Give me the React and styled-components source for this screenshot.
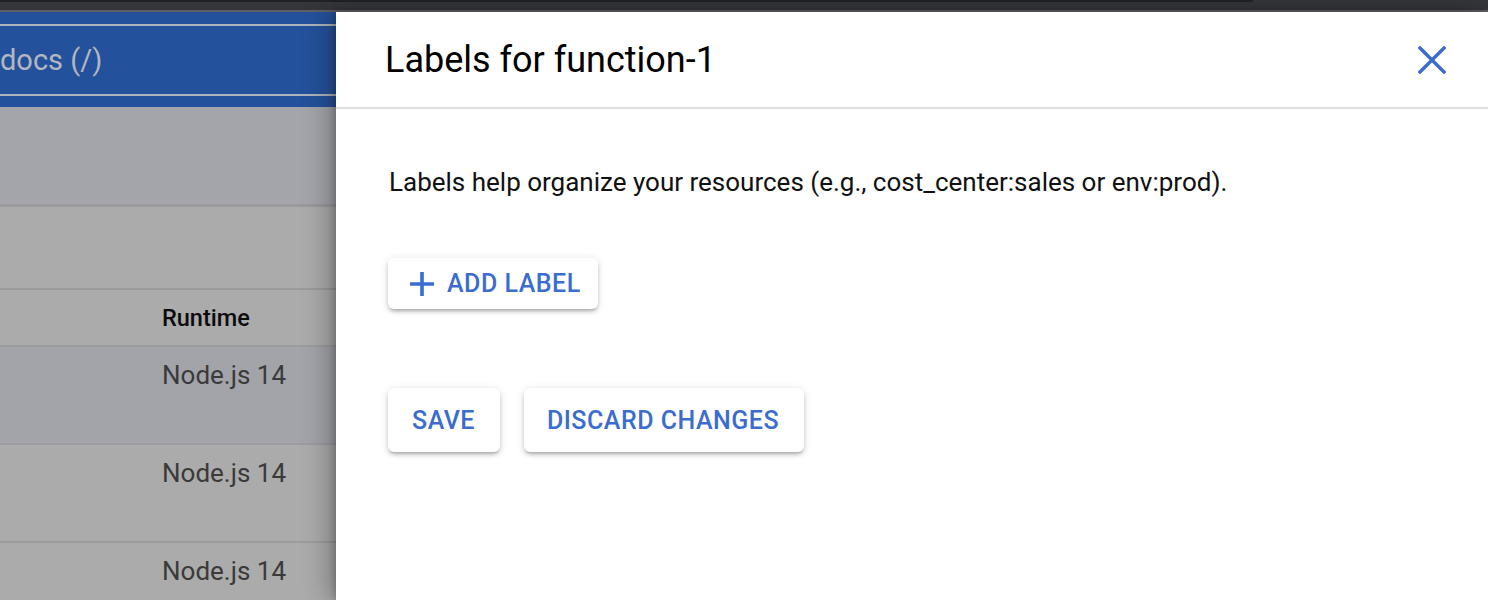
import styled, { createGlobalStyle } from 'styled-components';

const GlobalStyle = createGlobalStyle`
  html, body {
    margin: 0;
    padding: 0;
    overflow: hidden;
    background: #ababab;
  }
  * {
    box-sizing: border-box;
  }
`;

export default function App() {
  return (
    <>
      <GlobalStyle />
      <Page>
        <BrowserStrip>
          <TabEdge />
        </BrowserStrip>
        <Screen>
          <Behind>
            <SearchBar>
              <SearchField>
                <SearchHint>docs (/)</SearchHint>
              </SearchField>
            </SearchBar>
            <Band $tone="blue" $h={100} />
            <Band $tone="grey" $h={83} />
            <HeadRow>
              <Cell $head>Runtime</Cell>
            </HeadRow>
            <Row $tone="blue">
              <Cell>Node.js 14</Cell>
            </Row>
            <Row>
              <Cell>Node.js 14</Cell>
            </Row>
            <Row $last>
              <Cell>Node.js 14</Cell>
            </Row>
          </Behind>
          <Drawer>
            <DrawerHead>
              <Title>Labels for function-1</Title>
              <CloseButton aria-label="Close">
                <svg width="28" height="28" viewBox="0 0 28 28">
                  <path
                    d="M2 2 26 26 M26 2 2 26"
                    stroke="currentColor"
                    strokeWidth="3.4"
                    strokeLinecap="square"
                    fill="none"
                  />
                </svg>
              </CloseButton>
            </DrawerHead>
            <DrawerBody>
              <Hint>Labels help organize your resources (e.g., cost_center:sales or env:prod).</Hint>
              <Raised $h={51} $pl={22} $pr={17}>
                <svg width="24" height="24" viewBox="0 0 24 24">
                  <path d="M12 0v24M0 12h24" stroke="currentColor" strokeWidth="3.6" fill="none" />
                </svg>
                ADD LABEL
              </Raised>
              <Actions>
                <Raised $h={64} $pl={24} $pr={25}>SAVE</Raised>
                <Raised $h={64} $pl={23} $pr={25}>DISCARD CHANGES</Raised>
              </Actions>
            </DrawerBody>
          </Drawer>
        </Screen>
      </Page>
    </>
  );
}

const Page = styled.div`
  width: 1488px;
  height: 600px;
  display: flex;
  flex-direction: column;
  font-family: Roboto, "Liberation Sans", Arial, sans-serif;
  overflow: hidden;
`;

const BrowserStrip = styled.div`
  height: 12px;
  flex: none;
  background: #35363a;
  border-bottom: 2px solid #5f6064;
  position: relative;
`;

const TabEdge = styled.div`
  position: absolute;
  left: 0;
  top: 0;
  width: 1253px;
  height: 2px;
  background: #202124;
  border-bottom-right-radius: 6px;
`;

const Screen = styled.div`
  flex: 1;
  display: flex;
  min-height: 0;
`;

const Behind = styled.div`
  width: 336px;
  flex: none;
  display: flex;
  flex-direction: column;
  background: #ababab;
  overflow: hidden;
`;

const SearchBar = styled.div`
  height: 95px;
  flex: none;
  background: #24519b;
  padding-top: 12px;
`;

const SearchField = styled.div`
  height: 72px;
  border-top: 2px solid #afb3bb;
  border-bottom: 2px solid #afb3bb;
  display: flex;
  align-items: center;
`;

const SearchHint = styled.span`
  margin-left: 0;
  font-size: 29px;
  color: #b3b7c0;
  white-space: nowrap;
`;

const Band = styled.div`
  height: ${(p) => p.$h}px;
  flex: none;
  background: ${(p) => (p.$tone === 'blue' ? '#a4a5aa' : '#ababab')};
  border-bottom: ${(p) => (p.$tone === 'blue' ? '3px' : '2px')} solid #9a9a9a;
`;

const HeadRow = styled.div`
  height: 57px;
  flex: none;
  display: flex;
  align-items: center;
  padding-left: 162px;
  border-bottom: 2px solid #9c9c9c;
`;

const Row = styled.div`
  height: ${(p) => (p.$last ? 'auto' : '98px')};
  flex: ${(p) => (p.$last ? '1' : 'none')};
  padding: 13px 0 0 162px;
  background: ${(p) => (p.$tone === 'blue' ? '#a3a4a9' : '#ababab')};
  border-bottom: ${(p) => (p.$last ? 'none' : '2px solid #9c9c9c')};
`;

const Cell = styled.div`
  font-size: ${(p) => (p.$head ? '23.5px' : '26px')};
  line-height: ${(p) => (p.$head ? '28px' : '30px')};
  font-weight: ${(p) => (p.$head ? 500 : 400)};
  color: ${(p) => (p.$head ? '#0b0b0b' : '#3a3a3a')};
  white-space: nowrap;
`;

const Drawer = styled.div`
  flex: 1;
  background: #ffffff;
  display: flex;
  flex-direction: column;
  box-shadow: -8px 0 24px rgba(0, 0, 0, 0.28), -2px 0 6px rgba(0, 0, 0, 0.18);
  z-index: 1;
`;

const DrawerHead = styled.div`
  height: 97px;
  flex: none;
  display: flex;
  align-items: center;
  justify-content: space-between;
  padding: 0 42px 0 49px;
  border-bottom: 2px solid #e0e0e0;
`;

const Title = styled.h1`
  margin: 0;
  font-size: 36px;
  font-weight: 400;
  color: #000;
`;

const CloseButton = styled.button`
  border: none;
  background: none;
  padding: 0;
  display: flex;
  color: #3b6ccf;
  cursor: pointer;
`;

const DrawerBody = styled.div`
  display: flex;
  flex-direction: column;
  align-items: flex-start;
  padding: 58px 52px 0 52px;
`;

const Hint = styled.p`
  margin: 0 0 61px 1px;
  font-size: 26px;
  line-height: 30px;
  color: #111;
`;

const Raised = styled.button`
  height: ${(p) => p.$h}px;
  padding: 0 ${(p) => p.$pr}px 0 ${(p) => p.$pl}px;
  display: inline-flex;
  align-items: center;
  gap: 13px;
  border: none;
  border-radius: 6px;
  background: #fff;
  color: #3b6ccf;
  font-family: Roboto, "Liberation Sans", Arial, sans-serif;
  font-size: 25px;
  font-weight: 500;
  letter-spacing: 0.5px;
  box-shadow: 0 3px 3px -2px rgba(0, 0, 0, 0.2), 0 3px 4px 0 rgba(0, 0, 0, 0.14),
    0 1px 8px 0 rgba(0, 0, 0, 0.12);
  cursor: pointer;
`;

const Actions = styled.div`
  display: flex;
  gap: 24px;
  margin-top: 79px;
`;
